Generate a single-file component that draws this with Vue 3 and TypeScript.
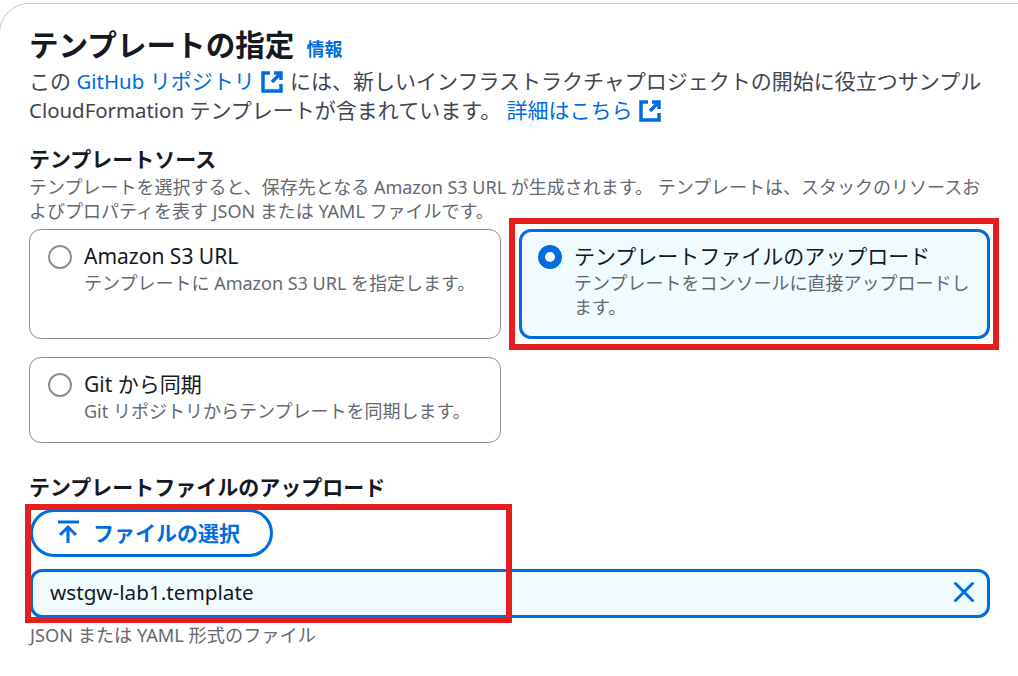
<script setup lang="ts">
// Template source form panel with callout boxes drawn over it.
interface Tile {
  id: string;
  label: string;
  desc: string;
  selected?: boolean;
}

const tiles: Tile[] = [
  { id: "s3", label: "Amazon S3 URL", desc: "テンプレートに Amazon S3 URL を指定します。" },
  {
    id: "upload",
    label: "テンプレートファイルのアップロード",
    desc: "テンプレートをコンソールに直接アップロードします。",
    selected: true,
  },
  { id: "git", label: "Git から同期", desc: "Git リポジトリからテンプレートを同期します。" },
];
</script>

<template>
  <div class="page">
    <section class="panel">
      <header class="head">
        <h2 class="head__title">テンプレートの指定</h2>
        <a class="head__info">情報</a>
      </header>
      <p class="intro">
        この <a class="link"><span class="latin">GitHub</span> リポジトリ</a>
        <svg class="ext" viewBox="0 0 22 22" aria-hidden="true">
          <path d="M9 2H2v18h18v-7" />
          <path d="M13 2h7v7M20 2l-9 9" />
        </svg>
        には、新しいインフラストラクチャプロジェクトの開始に役立つサンプル<br /><span class="latin">CloudFormation</span> テンプレートが含まれています。 <a class="link">詳細はこちら</a>
        <svg class="ext" viewBox="0 0 22 22" aria-hidden="true">
          <path d="M9 2H2v18h18v-7" />
          <path d="M13 2h7v7M20 2l-9 9" />
        </svg>
      </p>

      <div class="field field--source">
        <div class="field__label">テンプレートソース</div>
        <div class="field__desc">
          テンプレートを選択すると、保存先となる Amazon S3 URL が生成されます。 テンプレートは、スタックのリソースおよびプロパティを表す JSON または YAML ファイルです。
        </div>
        <div class="tiles">
          <div
            v-for="t in tiles"
            :key="t.id"
            class="tile"
            :class="{ 'tile--on': t.selected, 'tile--short': t.id === 'git' }"
          >
            <span class="radio" :class="{ 'radio--on': t.selected }"></span>
            <div>
              <div class="tile__label">{{ t.label }}</div>
              <div class="tile__desc">{{ t.desc }}</div>
            </div>
          </div>
        </div>
      </div>

      <div class="field field--upload">
        <div class="field__label">テンプレートファイルのアップロード</div>
        <button class="upload" type="button">
          <svg class="upload__icon" viewBox="0 0 22 24" aria-hidden="true">
            <path d="M1 2h21M11 23V7M3 15l8-8 8 8" />
          </svg>
          ファイルの選択
        </button>
        <div class="file">
          <span>wstgw-lab1.template</span>
          <svg class="file__x" viewBox="0 0 24 24" aria-hidden="true">
            <path d="M3.5 3.5l17 17M20.5 3.5l-17 17" />
          </svg>
        </div>
        <div class="hint">JSON または YAML 形式のファイル</div>
      </div>
    </section>

    <div class="callout callout--tile"></div>
    <div class="callout callout--file"></div>
  </div>
</template>

<style scoped>
.page {
  position: relative;
  width: 1018px;
  height: 676px;
  overflow: hidden;
  background: #fff;
  font-family: "Noto Sans", "Noto Sans CJK JP", sans-serif;
  color: #16191f;
}
.panel {
  box-sizing: border-box;
  width: 1060px;
  height: 720px;
  margin: 3px 0 0 -1px;
  padding: 22px 28px 0 29px;
  border: 1px solid #c6c6cd;
  border-radius: 30px;
}
.head {
  display: flex;
  align-items: baseline;
  gap: 12px;
}
.head__title {
  margin: 0;
  font-size: 29.6px;
  line-height: 38px;
  font-weight: 700;
}
.head__info {
  font-size: 18px;
  font-weight: 700;
  color: #006ce0;
}
.intro {
  width: 970px;
  margin: 3px 0 0;
  font-size: 21px;
  line-height: 29px;
  color: #424650;
}
.latin {
  font-size: 20.4px;
}
.link {
  color: #006ce0;
}
.ext {
  width: 22px;
  height: 22px;
  margin: 0 2px 0 6px;
  vertical-align: -4px;
  fill: none;
  stroke: #006ce0;
  stroke-width: 3.5;
}
.field--source {
  margin-top: 19px;
}
.field__label {
  font-size: 21px;
  line-height: 31px;
  font-weight: 700;
}
.field__desc {
  width: 960px;
  font-size: 18px;
  line-height: 24px;
  color: #656871;
}
.tiles {
  display: grid;
  grid-template-columns: 472px 471px;
  column-gap: 18px;
  row-gap: 18px;
  margin-top: 6px;
}
.tile {
  display: flex;
  gap: 12px;
  box-sizing: border-box;
  height: 110px;
  padding: 11px 18px;
  border: 1px solid #8c8c94;
  border-radius: 12px;
}
.tile--short {
  height: 86px;
}
.tile--on {
  border: 3px solid #006ce0;
  padding: 9px 16px;
  background: #f0fbff;
}
.radio {
  flex: none;
  box-sizing: border-box;
  width: 24px;
  height: 24px;
  margin-top: 4px;
  border: 2px solid #8c8c94;
  border-radius: 50%;
  background: #fff;
}
.radio--on {
  border: 7px solid #006ce0;
}
.tile__label {
  font-size: 21px;
  line-height: 30px;
}
.tile__desc {
  font-size: 18px;
  line-height: 24px;
  color: #656871;
}
.field--upload {
  margin-top: 29px;
}
.upload {
  display: flex;
  align-items: center;
  gap: 14px;
  box-sizing: border-box;
  width: 243px;
  height: 48px;
  margin: 6px 0 0 1px;
  padding: 0 0 2px 24px;
  border: 3px solid #006ce0;
  border-radius: 24px;
  background: #fff;
  font: inherit;
  font-size: 21px;
  font-weight: 700;
  color: #006ce0;
}
.upload__icon {
  width: 22px;
  height: 24px;
  fill: none;
  stroke: #006ce0;
  stroke-width: 3;
}
.file {
  display: flex;
  align-items: center;
  justify-content: space-between;
  box-sizing: border-box;
  width: 960px;
  height: 49px;
  margin: 12px 0 0 1px;
  padding: 0 11px 3px 17px;
  border: 3px solid #006ce0;
  border-radius: 12px;
  background: #f0fbff;
  font-size: 20.7px;
}
.file__x {
  width: 24px;
  height: 24px;
  fill: none;
  stroke: #006ce0;
  stroke-width: 3;
  stroke-linecap: round;
}
.hint {
  margin: 5px 0 0 1px;
  font-size: 18.2px;
  line-height: 24px;
  color: #656871;
}
.callout {
  position: absolute;
  box-sizing: border-box;
  border: 6px solid #e61e1e;
}
.callout--tile {
  left: 509px;
  top: 218px;
  width: 490px;
  height: 132px;
}
.callout--file {
  left: 25px;
  top: 504px;
  width: 487px;
  height: 119px;
}
</style>
